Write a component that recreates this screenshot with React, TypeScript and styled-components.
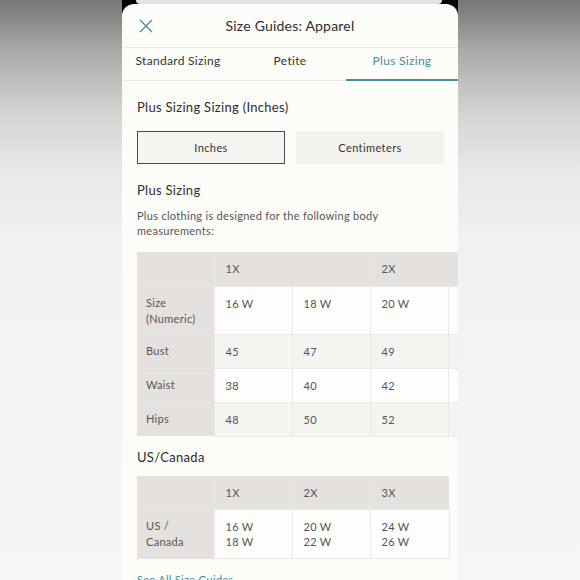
import React from "react";
import styled, { createGlobalStyle } from "styled-components";

const Global = createGlobalStyle`
  html, body { margin: 0; padding: 0; }
  body {
    width: 580px;
    height: 580px;
    overflow: hidden;
    font-family: Lato, "Open Sans", "Liberation Sans", sans-serif;
    background: linear-gradient(180deg, #767676 0px, #a9a9a9 50px, #d2d2d2 110px, #e9e8e6 170px, #f2f1ef 240px, #f7f6f4 580px);
  }
`;

const TEAL = "#478d97";

const Stage = styled.div`
  width: 580px;
  height: 580px;
  display: flex;
  justify-content: center;
`;

const Stack = styled.div`
  position: relative;
  width: 336px;
  height: 580px;
  padding-top: 4px;
  box-sizing: border-box;
  &::before {
    content: "";
    position: absolute;
    left: 0;
    right: 0;
    top: 0;
    height: 14px;
    background: #050505;
  }
  &::after {
    content: "";
    position: absolute;
    left: 14px;
    right: 16px;
    top: 0;
    height: 4px;
    background: #e3e3e2;
    border-radius: 0 0 4px 4px;
  }
`;

const Card = styled.div`
  position: relative;
  z-index: 1;
  height: 100%;
  background: #fcfcf9;
  border-radius: 12px 12px 0 0;
  overflow: hidden;
`;

const Header = styled.div`
  height: 43px;
  display: grid;
  grid-template-columns: 44px 1fr 44px;
  align-items: center;
  border-bottom: 1px solid #e9e8e5;
`;

const CloseButton = styled.div`
  display: flex;
  justify-content: center;
  padding-left: 3px;
  padding-top: 1px;
`;

const Title = styled.div`
  text-align: center;
  font-size: 14px;
  color: #2e2e2e;
  letter-spacing: 0.2px;
`;

const Tabs = styled.div`
  display: grid;
  grid-template-columns: repeat(3, 1fr);
  border-bottom: 1px solid #ebeae7;
`;

const Tab = styled.div<{ $active?: boolean }>`
  height: 33px;
  box-sizing: border-box;
  padding-bottom: 6px;
  display: flex;
  align-items: center;
  justify-content: center;
  font-size: 12px;
  letter-spacing: 0.3px;
  color: ${(p) => (p.$active ? TEAL : "#333")};
  border-bottom: 2px solid ${(p) => (p.$active ? TEAL : "transparent")};
  margin-bottom: -1px;
`;

const Content = styled.div`
  padding: 17px 14px 0 15px;
  display: flex;
  flex-direction: column;
`;

const SectionTitle = styled.div<{ $mt?: number }>`
  font-size: 13px;
  color: #2e2e2e;
  letter-spacing: 0.3px;
  line-height: 18px;
  margin-top: ${(p) => p.$mt ?? 0}px;
`;

const Toggle = styled.div`
  display: grid;
  grid-template-columns: 1fr 1fr;
  gap: 11px;
  margin-top: 15px;
`;

const ToggleButton = styled.div<{ $active?: boolean }>`
  height: 33px;
  box-sizing: border-box;
  display: flex;
  align-items: center;
  justify-content: center;
  font-size: 11px;
  letter-spacing: 0.4px;
  color: #333;
  background: ${(p) => (p.$active ? "#f6f5f2" : "#f3f2ef")};
  border: 1px solid ${(p) => (p.$active ? "#4a4a4a" : "transparent")};
`;

const Paragraph = styled.p`
  margin: 9px 0 0;
  font-size: 11px;
  line-height: 15px;
  letter-spacing: 0.3px;
  color: #555;
`;

const Scroller = styled.div<{ $mt: number }>`
  margin-top: ${(p) => p.$mt}px;
  margin-right: -14px;
  overflow: hidden;
  flex-shrink: 0;
`;

const Table = styled.table`
  border-collapse: collapse;
  table-layout: fixed;
  font-size: 11px;
  letter-spacing: 0.3px;
  color: #555;
`;

const Col = styled.col<{ $w: number }>`
  width: ${(p) => p.$w}px;
`;

const HeadCell = styled.th`
  background: #e4e1de;
  font-weight: normal;
  text-align: left;
  padding: 0 11px;
  line-height: 15px;
  border-left: 1px solid #e9e7e4;
  vertical-align: middle;
  &:first-child { border-left: none; }
`;

const LabelCell = styled.th`
  background: #e4e1de;
  font-weight: normal;
  text-align: left;
  vertical-align: top;
  padding: 8px 9px 0;
  line-height: 16px;
  border-top: 1px solid #eae7e4;
`;

const DataCell = styled.td<{ $alt?: boolean }>`
  background: ${(p) => (p.$alt ? "#f5f4f1" : "#fdfdfb")};
  vertical-align: top;
  padding: 9px 11px 0;
  line-height: 15px;
  border: 1px solid #ebe9e6;
`;

const Row = styled.tr<{ $h: number }>`
  height: ${(p) => p.$h}px;
`;

const Link = styled.div`
  margin-top: 14px;
  font-size: 11px;
  color: ${TEAL};
  letter-spacing: 0.3px;
`;

const CloseIcon = () => (
  <svg width="14" height="14" viewBox="0 0 14 14">
    <path d="M1 1 L13 13 M13 1 L1 13" stroke={TEAL} strokeWidth="1.4" fill="none" />
  </svg>
);

const plusRows = [
  { label: ["Size", "(Numeric)"], h: 48, alt: false, vals: ["16 W", "18 W", "20 W", "22 W"] },
  { label: ["Bust"], h: 34, alt: true, vals: ["45", "47", "49", "51"] },
  { label: ["Waist"], h: 34, alt: false, vals: ["38", "40", "42", "44"] },
  { label: ["Hips"], h: 34, alt: true, vals: ["48", "50", "52", "54"] },
];

const usVals = [
  ["16 W", "18 W"],
  ["20 W", "22 W"],
  ["24 W", "26 W"],
];

export default function App() {
  return (
    <>
      <Global />
      <Stage>
        <Stack>
          <Card>
            <Header>
              <CloseButton>
                <CloseIcon />
              </CloseButton>
              <Title>Size Guides: Apparel</Title>
              <div />
            </Header>
            <Tabs>
              <Tab>Standard Sizing</Tab>
              <Tab>Petite</Tab>
              <Tab $active>Plus Sizing</Tab>
            </Tabs>
            <Content>
              <SectionTitle>Plus Sizing Sizing (Inches)</SectionTitle>
              <Toggle>
                <ToggleButton $active>Inches</ToggleButton>
                <ToggleButton>Centimeters</ToggleButton>
              </Toggle>
              <SectionTitle $mt={17}>Plus Sizing</SectionTitle>
              <Paragraph>
                Plus clothing is designed for the following body measurements:
              </Paragraph>
              <Scroller $mt={14}>
                <Table style={{ width: 77 + 78 * 4 }}>
                  <colgroup>
                    <Col $w={77} />
                    {[0, 1, 2, 3].map((i) => (
                      <Col key={i} $w={78} />
                    ))}
                  </colgroup>
                  <thead>
                    <Row $h={34}>
                      <HeadCell />
                      <HeadCell colSpan={2}>1X</HeadCell>
                      <HeadCell colSpan={2}>2X</HeadCell>
                    </Row>
                  </thead>
                  <tbody>
                    {plusRows.map((r) => (
                      <Row key={r.label[0]} $h={r.h}>
                        <LabelCell>
                          {r.label.map((l) => (
                            <div key={l}>{l}</div>
                          ))}
                        </LabelCell>
                        {r.vals.map((v, i) => (
                          <DataCell key={i} $alt={r.alt}>
                            {v}
                          </DataCell>
                        ))}
                      </Row>
                    ))}
                  </tbody>
                </Table>
              </Scroller>
              <SectionTitle $mt={11}>US/Canada</SectionTitle>
              <Scroller $mt={10}>
                <Table style={{ width: 77 + 78 * 3 }}>
                  <colgroup>
                    <Col $w={77} />
                    <Col $w={78} />
                    <Col $w={78} />
                    <Col $w={79} />
                  </colgroup>
                  <thead>
                    <Row $h={34}>
                      <HeadCell />
                      <HeadCell>1X</HeadCell>
                      <HeadCell>2X</HeadCell>
                      <HeadCell>3X</HeadCell>
                    </Row>
                  </thead>
                  <tbody>
                    <Row $h={49}>
                      <LabelCell>
                        <div>US /</div>
                        <div>Canada</div>
                      </LabelCell>
                      {usVals.map((pair, i) => (
                        <DataCell key={i}>
                          {pair.map((v) => (
                            <div key={v}>{v}</div>
                          ))}
                        </DataCell>
                      ))}
                    </Row>
                  </tbody>
                </Table>
              </Scroller>
              <Link>See All Size Guides</Link>
            </Content>
          </Card>
        </Stack>
      </Stage>
    </>
  );
}
